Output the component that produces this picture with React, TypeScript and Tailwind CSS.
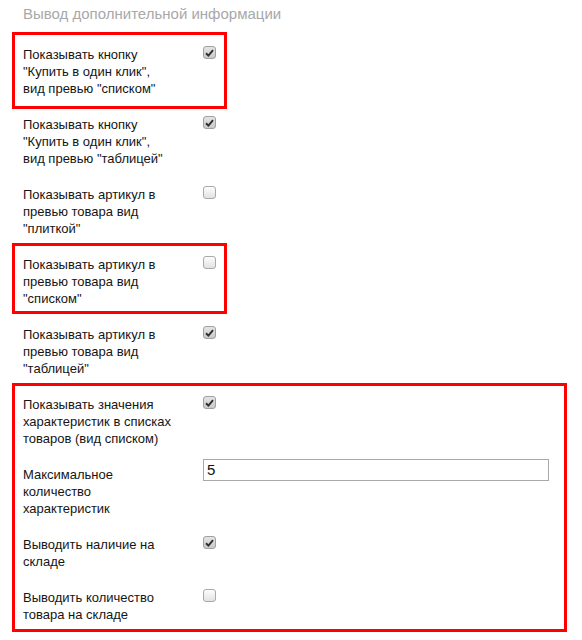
import React from "react";

type Row =
  | { kind: "check"; lines: string[]; checked: boolean }
  | { kind: "input"; lines: string[]; value: string };

const groupA: Row[] = [
  { kind: "check", lines: ["Показывать кнопку", "\"Купить в один клик\",", "вид превью \"списком\""], checked: true },
];

const groupB: Row[] = [
  { kind: "check", lines: ["Показывать кнопку", "\"Купить в один клик\",", "вид превью \"таблицей\""], checked: true },
  { kind: "check", lines: ["Показывать артикул в", "превью товара вид", "\"плиткой\""], checked: false },
];

const groupC: Row[] = [
  { kind: "check", lines: ["Показывать артикул в", "превью товара вид", "\"списком\""], checked: false },
];

const groupD: Row[] = [
  { kind: "check", lines: ["Показывать артикул в", "превью товара вид", "\"таблицей\""], checked: true },
];

const groupE: Row[] = [
  { kind: "check", lines: ["Показывать значения", "характеристик в списках", "товаров (вид списком)"], checked: true },
  { kind: "input", lines: ["Максимальное", "количество", "характеристик"], value: "5" },
  { kind: "check", lines: ["Выводить наличие на", "складе"], checked: true },
  { kind: "check", lines: ["Выводить количество", "товара на складе"], checked: false },
];

function Checkbox({ checked }: { checked: boolean }) {
  return (
    <span
      className={
        checked
          ? "flex h-[13px] w-[13px] items-center justify-center rounded-[3px] border border-[#a0a0a0] bg-gradient-to-b from-[#e4e4e4] to-[#c9c9c9]"
          : "flex h-[13px] w-[13px] items-center justify-center rounded-[3px] border border-[#a9a9a9] bg-gradient-to-b from-[#fdfdfd] to-[#e2e2e2]"
      }
    >
      {checked && (
        <svg width="9" height="8" viewBox="0 0 9 8">
          <path d="M1 4.3 L3.4 6.6 L8 1.2" fill="none" stroke="#2e2e2e" strokeWidth="1.9" />
        </svg>
      )}
    </span>
  );
}

// pb differs for rows whose red frame sits tighter below them
function SettingRow({ row, pb = "pb-[9px]" }: { row: Row; pb?: string }) {
  return (
    <div className={`grid grid-cols-[180px_1fr] pt-[10px] ${pb}`}>
      <div className="text-[13px] leading-[17px] text-[#151515]">
        {row.lines.map((l, i) => (
          <div key={i} className="whitespace-nowrap">
            {l}
          </div>
        ))}
      </div>
      <div>
        {row.kind === "check" ? (
          <Checkbox checked={row.checked} />
        ) : (
          <div className="-mt-[7px] h-[22px] w-[346px] border border-[#a9a9a9] bg-white pl-[3px] text-[15px] leading-[20px] text-[#111]">
            {row.value}
          </div>
        )}
      </div>
    </div>
  );
}

function Box({ className, children }: { className: string; children: React.ReactNode }) {
  return <div className={`-ml-[11px] border-[3px] border-[#ff0000] pl-[8px] ${className}`}>{children}</div>;
}

export default function App() {
  return (
    <div className="min-h-[640px] bg-white pl-[23px] font-['Liberation_Sans',Arial,sans-serif]">
      <div className="pt-[4px] text-[15px] leading-[20px] text-[#a8a8a8]">Вывод дополнительной информации</div>
      <div className="mt-[12px]">
        <Box className="-mt-[4px] -mb-[3px] w-[215px] pt-[1px]">
          {groupA.map((r, i) => (
            <SettingRow key={i} row={r} />
          ))}
        </Box>
        {groupB.map((r, i) => (
          <SettingRow key={i} row={r} />
        ))}
        <Box className="-mt-[3px] mb-[2px] w-[215px]">
          {groupC.map((r, i) => (
            <SettingRow key={i} row={r} pb="pb-[4px]" />
          ))}
        </Box>
        {groupD.map((r, i) => (
          <SettingRow key={i} row={r} />
        ))}
        <Box className="-mt-[3px] w-[555px]">
          {groupE.map((r, i) => (
            <SettingRow key={i} row={r} pb={i === groupE.length - 1 ? "pb-[6px]" : "pb-[9px]"} />
          ))}
        </Box>
      </div>
    </div>
  );
}
